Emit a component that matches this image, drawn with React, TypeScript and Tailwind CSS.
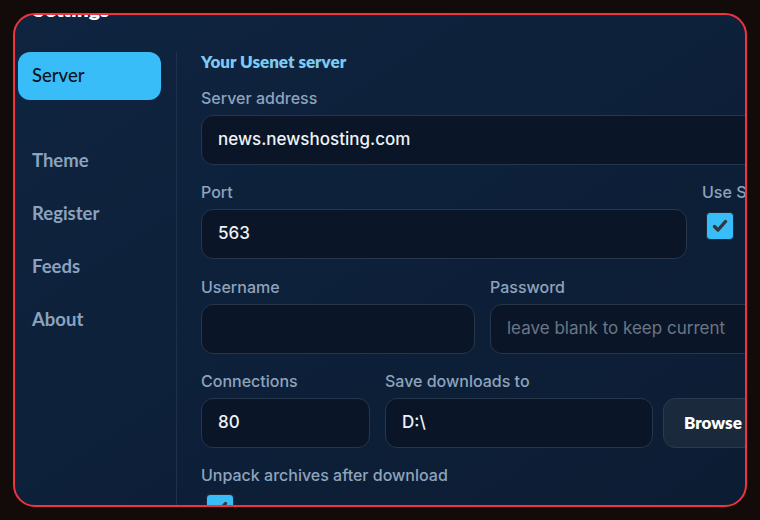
import React, { useState } from 'react';

const NAV = ['Server', 'Theme', 'Register', 'Feeds', 'About'];

const Label: React.FC<{ children: React.ReactNode }> = ({ children }) => (
    <div className="h-5 leading-5 text-[16px] font-medium text-[#8ea4bd] whitespace-nowrap">{children}</div>
);

const Field: React.FC<{ value?: string; placeholder?: string; className?: string }> = ({ value, placeholder, className }) => (
    <div className={`h-[50px] rounded-xl border border-[#26364b] bg-[#0a1627] flex items-center px-4 ${className ?? ''}`}>
        {value ? (
            <span className="text-[17px] font-medium text-[#eef2f7] whitespace-nowrap">{value}</span>
        ) : (
            <span className="text-[17px] text-[#6b7686] whitespace-nowrap">{placeholder}</span>
        )}
    </div>
);

const Check: React.FC<{ className?: string }> = ({ className }) => (
    <div className={`w-7 h-7 rounded-[4px] bg-[#38bdf8] border border-[#1d2a3a] flex items-center justify-center ${className ?? ''}`}>
        <svg width="20" height="20" viewBox="0 0 20 20" fill="none">
            <path d="M4.5 10.5 L8 14 L15.5 5.5" stroke="#34373a" strokeWidth="3.4" strokeLinecap="round" strokeLinejoin="round" />
        </svg>
    </div>
);

const App: React.FC = () => {
    const [active, setActive] = useState('Server');

    return (
        <div className="w-[760px] h-[520px] bg-[#130b0a] p-[13px] overflow-hidden" style={{ fontFamily: 'Inter, "Liberation Sans", sans-serif' }}>
            <div className="relative h-[494px] rounded-[22px] border-2 border-[#f0343f] overflow-hidden bg-gradient-to-br from-[#0f2440] to-[#0c1c33] pt-[37px] flex">
                {/* page title, scrolled mostly out of view */}
                <div className="absolute left-[18px] top-[-18px] text-[21px] font-extrabold text-white leading-6" style={{ fontFamily: 'Lato, "Noto Sans", sans-serif' }}>
                    Settings
                </div>

                {/* sidebar */}
                <div className="w-[162px] shrink-0 border-r border-[#1f3149] pl-[3px] pr-[14px] flex flex-col" style={{ fontFamily: 'Lato, "Noto Sans", sans-serif' }}>
                    {NAV.map((name, i) => (
                        <button
                            key={name}
                            onClick={() => setActive(name)}
                            className={`h-12 w-[143px] shrink-0 rounded-xl px-[14px] text-left text-[18.5px] ${i === 1 ? 'mt-[37px]' : i > 1 ? 'mt-[5px]' : ''} ${active === name ? 'bg-[#38bdf8] text-[#0b1220] font-medium' : 'text-[#8ba3bf] font-bold'}`}
                        >
                            {name}
                        </button>
                    ))}
                </div>

                {/* server form */}
                <div className="pl-6 shrink-0 w-[587px] flex flex-col">
                    <div className="h-5 leading-5 text-[17px] font-extrabold text-[#7ccbf2]" style={{ fontFamily: 'Lato, "Noto Sans", sans-serif' }}>Your Usenet server</div>

                    <div className="mt-4 flex flex-col gap-[7px]">
                        <Label>Server address</Label>
                        <Field value="news.newshosting.com" />
                    </div>

                    <div className="mt-[17px] flex gap-[15px]">
                        <div className="flex-1 flex flex-col gap-[7px]">
                            <Label>Port</Label>
                            <Field value="563" />
                        </div>
                        <div className="w-[62px] flex flex-col gap-[10px]">
                            <Label>Use SSL</Label>
                            <Check className="ml-1" />
                        </div>
                    </div>

                    <div className="mt-[18px] grid grid-cols-2 gap-x-[15px]">
                        <div className="flex flex-col gap-[7px]">
                            <Label>Username</Label>
                            <Field />
                        </div>
                        <div className="flex flex-col gap-[7px]">
                            <Label>Password</Label>
                            <Field placeholder="leave blank to keep current" />
                        </div>
                    </div>

                    <div className="mt-[17px] flex items-end">
                        <div className="w-[169px] flex flex-col gap-[7px]">
                            <Label>Connections</Label>
                            <Field value="80" />
                        </div>
                        <div className="ml-[15px] w-[268px] flex flex-col gap-[7px]">
                            <Label>Save downloads to</Label>
                            <Field value="D:\" />
                        </div>
                        <button className="ml-[10px] flex-1 h-[50px] rounded-xl border border-[#2a3a4f] bg-[#1a293c] px-5 text-left text-[17px] font-extrabold text-white" style={{ fontFamily: 'Lato, "Noto Sans", sans-serif' }}>
                            Browse
                        </button>
                    </div>

                    <div className="mt-[17px] flex flex-col gap-[9px]">
                        <Label>Unpack archives after download</Label>
                        <Check className="ml-[5px]" />
                    </div>
                </div>
            </div>
        </div>
    );
};

export default App;
